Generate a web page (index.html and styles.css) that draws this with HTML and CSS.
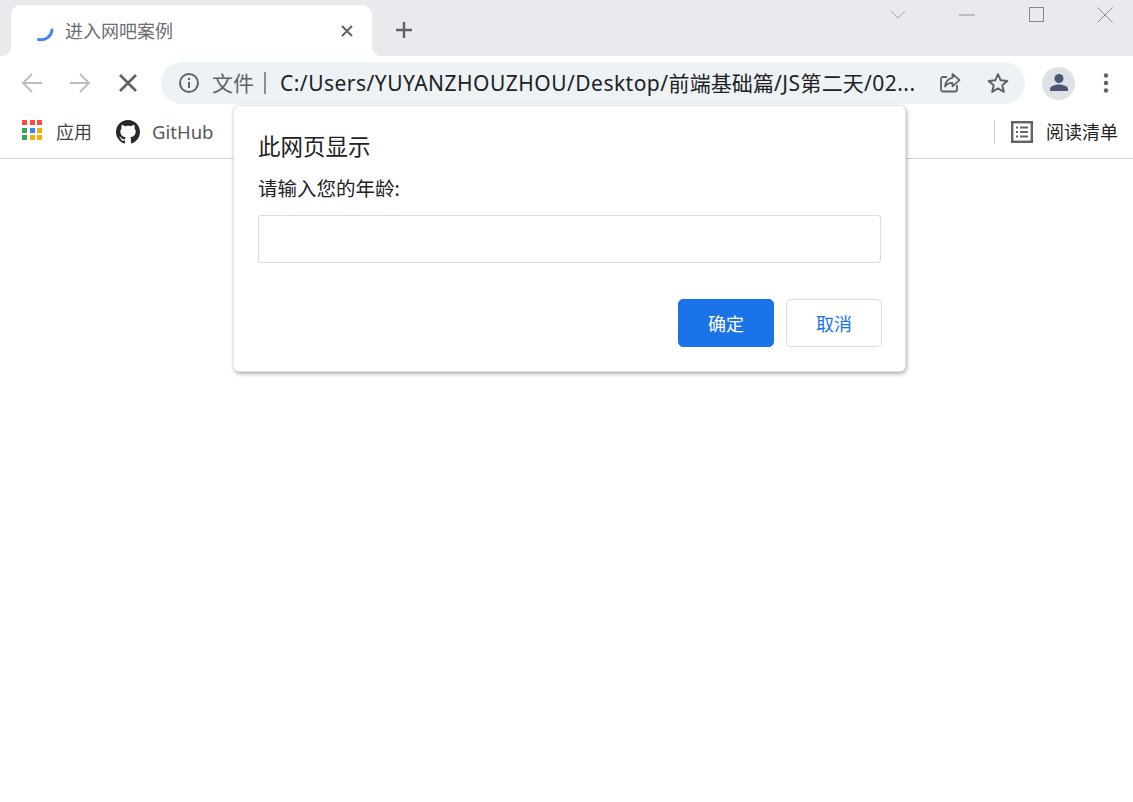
FILE: index.html
```html
<!DOCTYPE html>
<html lang="zh-CN">
<head>
<meta charset="utf-8">
<title>进入网吧案例</title>
<link rel="stylesheet" href="styles.css">
</head>
<body>
<div class="strip">
  <div class="tab">
    <svg class="spin" width="20" height="22" viewBox="0 0 20 22"><path d="M3.500 19.500C9.500 20.500 16 17.500 17 10" fill="none" stroke="#4285f4" stroke-width="3" stroke-linecap="round"/></svg>
    <span class="tab-title">进入网吧案例</span>
    <svg class="tab-x" width="14" height="14" viewBox="0 0 14 14"><path d="M2 2l10 10M12 2L2 12" stroke="#5f6368" stroke-width="2"/></svg>
  </div>
  <svg class="plus" width="20" height="20" viewBox="0 0 20 20"><path d="M10 2v16M2 10h16" stroke="#5f6368" stroke-width="2.400"/></svg>
  <div class="winctl">
    <svg width="16" height="10" viewBox="0 0 16 10"><path d="M1 1l7 7 7-7" fill="none" stroke="#a3a5a9" stroke-width="1"/></svg>
    <svg width="16" height="2" viewBox="0 0 16 2"><path d="M0 1h16" stroke="#8d8f93" stroke-width="1"/></svg>
    <svg width="15" height="15" viewBox="0 0 15 15"><rect x=".5" y=".5" width="14" height="14" fill="none" stroke="#85878b"/></svg>
    <svg width="16" height="16" viewBox="0 0 16 16"><path d="M.5.5l15 15M15.500.5l-15 15" stroke="#8d8f93" stroke-width="1"/></svg>
  </div>
</div>
<div class="toolbar">
  <svg class="nav" width="24" height="24" viewBox="0 0 24 24"><path d="M22 12H3M12 3l-9 9 9 9" fill="none" stroke="#bcbec1" stroke-width="2"/></svg>
  <svg class="nav" width="24" height="24" viewBox="0 0 24 24"><path d="M2 12h19M12 3l9 9-9 9" fill="none" stroke="#bcbec1" stroke-width="2"/></svg>
  <svg class="nav" width="24" height="24" viewBox="0 0 24 24"><path d="M4 4l16 16M20 4L4 20" stroke="#5f6368" stroke-width="2.600"/></svg>
  <div class="omni">
    <svg class="info" width="22" height="22" viewBox="0 0 22 22"><circle cx="11" cy="11" r="9" fill="none" stroke="#5f6368" stroke-width="2"/><path d="M11 10v6" stroke="#5f6368" stroke-width="2"/><circle cx="11" cy="7" r="1.200" fill="#5f6368"/></svg>
    <span class="scheme">文件</span>
    <span class="sep"></span>
    <span class="url">C:/Users/YUYANZHOUZHOU/Desktop/<span class="cjk">前端基础篇</span>/JS<span class="cjk">第二天</span>/02...</span>
    <svg class="share" width="24" height="24" viewBox="0 0 24 24"><path d="M19 14v4.500a2 2 0 0 1-2 2H5a2 2 0 0 1-2-2V8a2 2 0 0 1 2-2h4" fill="none" stroke="#5f6368" stroke-width="1.800"/><path d="M14.500 3l7 6.200-7 6.200v-3.600c-3.400 0-5.700 1-7.500 3.700.5-4.300 3-8 7.500-8.700z" fill="none" stroke="#5f6368" stroke-width="1.800" stroke-linejoin="round"/></svg>
    <svg class="star" width="24" height="24" viewBox="0 0 24 24"><path d="M12 3.200l2.700 6.100 6.600.6-5 4.400 1.500 6.500L12 17.400l-5.800 3.400 1.500-6.500-5-4.400 6.600-.6z" fill="none" stroke="#5f6368" stroke-width="2" stroke-linejoin="round"/></svg>
  </div>
  <div class="avatar">
    <svg width="22" height="22" viewBox="0 0 22 22"><circle cx="11" cy="6.500" r="4.500" fill="#4c5773"/><path d="M2 19v-2c0-3 5-4.600 9-4.600s9 1.600 9 4.600v2z" fill="#4c5773"/></svg>
  </div>
  <svg class="more" width="6" height="20" viewBox="0 0 6 20"><circle cx="3" cy="2.500" r="2.200" fill="#5f6368"/><circle cx="3" cy="10" r="2.200" fill="#5f6368"/><circle cx="3" cy="17.500" r="2.200" fill="#5f6368"/></svg>
</div>
<div class="bookmarks">
  <svg class="apps" width="20" height="21" viewBox="0 0 20 21">
    <rect x="0" y="0" width="5" height="5" fill="#ff4a3d"/><rect x="8" y="0" width="5" height="5" fill="#ff4a3d"/><rect x="15" y="0" width="5" height="5" fill="#ff4a3d"/>
    <rect x="0" y="8" width="5" height="5" fill="#34a853"/><rect x="8" y="8" width="5" height="5" fill="#2f86f6"/><rect x="15" y="8" width="5" height="5" fill="#fbac04"/>
    <rect x="0" y="15" width="5" height="5" fill="#34a853"/><rect x="8" y="15" width="5" height="5" fill="#fbac04"/><rect x="15" y="15" width="5" height="5" fill="#fbac04"/>
  </svg>
  <span class="bm apps-label">应用</span>
  <svg class="gh" width="24" height="24" viewBox="0 0 16 16"><path fill="#24292e" d="M8 0C3.580 0 0 3.580 0 8c0 3.540 2.290 6.530 5.470 7.590.4.070.55-.17.55-.38 0-.19-.01-.82-.01-1.490-2.010.37-2.530-.49-2.690-.94-.09-.23-.48-.94-.82-1.130-.28-.15-.68-.52-.01-.53.630-.01 1.080.58 1.230.82.720 1.210 1.870.87 2.330.66.070-.52.280-.87.510-1.070-1.780-.2-3.640-.89-3.640-3.950 0-.87.310-1.590.820-2.150-.08-.2-.36-1.020.08-2.120 0 0 .67-.21 2.200.82.640-.18 1.320-.27 2-.27s1.360.09 2 .27c1.530-1.040 2.200-.82 2.200-.82.440 1.100.16 1.920.08 2.120.51.560.82 1.270.82 2.150 0 3.070-1.870 3.750-3.650 3.950.29.25.54.73.54 1.480 0 1.070-.01 1.930-.01 2.200 0 .21.150.46.550.38A8.010 8.010 0 0 0 16 8c0-4.420-3.580-8-8-8z"/></svg>
  <span class="bm github">GitHub</span>
  <span class="bm-sep"></span>
  <svg class="list" width="22" height="22" viewBox="0 0 22 22"><rect x="1.200" y="1.200" width="19.600" height="19.600" fill="none" stroke="#5f6368" stroke-width="2.400"/><path d="M5 6.500h2M9 6.500h8M5 11h2M9 11h8M5 15.500h2M9 15.500h8" stroke="#5f6368" stroke-width="2"/></svg>
  <span class="bm read">阅读清单</span>
</div>
<div class="dialog">
  <div class="dlg-title">此网页显示</div>
  <div class="dlg-msg">请输入您的年龄:</div>
  <div class="dlg-input"></div>
  <div class="dlg-actions">
    <button class="btn primary">确定</button>
    <button class="btn">取消</button>
  </div>
</div>
</body>
</html>
```
FILE: styles.css
```css
* { box-sizing: border-box; }
html, body { margin: 0; height: 100%; background: #fff; overflow: hidden; }
body { font-family: "Noto Sans", "Noto Sans CJK SC", sans-serif; position: relative; }
svg { display: block; flex: none; }

.strip { height: 56px; background: #e8eaed; display: flex; align-items: flex-end; padding-left: 11px; position: relative; }
.tab { width: 361px; height: 51px; background: #fff; border-radius: 10px 10px 0 0; display: flex; align-items: center; padding: 0 18px 0 24px; position: relative; }
.tab::before, .tab::after { content: ""; position: absolute; bottom: 0; width: 10px; height: 10px; }
.tab::before { left: -10px; background: radial-gradient(circle at 0 0, #e8eaed 10px, #fff 10.500px); }
.tab::after { right: -10px; background: radial-gradient(circle at 100% 0, #e8eaed 10px, #fff 10.500px); }
.tab-title { font-size: 18px; color: #6b6e72; margin-left: 10px; flex: 1; line-height: 24px; }
.plus { margin: 0 0 16px 22px; }
.winctl { position: absolute; top: 7px; left: 890px; width: 223px; display: flex; align-items: center; justify-content: space-between; height: 15px; }

.toolbar { height: 50px; display: flex; align-items: center; padding: 4px 15px 0 20px; background: #fff; }
.nav { margin-right: 24px; }
.nav:nth-child(3) { margin-right: 21px; }
.omni { width: 864px; height: 42px; border-radius: 21px; background: #edf2f5; display: flex; align-items: center; padding-left: 17px; }
.scheme { font-size: 21px; color: #5f6368; margin-left: 12px; line-height: 26px; }
.sep { width: 2px; height: 22px; background: #8b8e92; margin: 0 14px 0 10px; }
.url { font-size: 21px; letter-spacing: .48px; color: #202124; line-height: 26px; white-space: nowrap; width: 658px; }
.cjk { letter-spacing: .1px; }
.star { margin-left: 24px; }
.avatar { width: 33px; height: 33px; border-radius: 50%; background: #dee1e6; display: flex; align-items: center; justify-content: center; margin-left: 17px; }
.more { margin-left: 28px; }

.bookmarks { height: 52.5px; border-bottom: 1px solid #d4d5d7; display: flex; align-items: center; padding: 0 15px 0 22px; }
.apps { margin-bottom: 3px; }
.bm { font-size: 18px; color: #3c4043; line-height: 24px; }
.apps-label { margin-left: 14px; color: #444; }
.gh { margin-left: 24px; }
.github { margin-left: 12px; color: #55585c; font-size: 18.500px; }
.bm-sep { width: 1px; height: 24px; background: #cfd1d4; margin-left: auto; }
.list { margin-left: 16px; }
.read { margin-left: 13px; color: #222; }

.dialog { position: absolute; left: 234px; top: 106px; width: 671px; height: 265px; background: #fff; border-radius: 5px; box-shadow: 0 0 0 1px #e3e3e3, 1px 2px 5px rgba(0,0,0,.45); padding: 26px 23px 24px 24px; }
.dlg-title { font-size: 22.500px; line-height: 30px; color: #202124; }
.dlg-msg { font-size: 19.500px; line-height: 24px; color: #202124; margin-top: 15px; }
.dlg-input { height: 48px; border: 1px solid #dadce0; border-radius: 3px; margin: 14px 1px 0 0; }
.dlg-actions { display: flex; justify-content: flex-end; gap: 12px; margin-top: 36px; }
.btn { width: 96px; height: 48px; border: 1px solid #dadce0; border-radius: 5px; background: #fff; color: #1a73e8; font: 18px "Noto Sans CJK SC", sans-serif; padding: 0; }
.btn.primary { background: #1a73e8; border-color: #1a73e8; color: #fff; }
```
